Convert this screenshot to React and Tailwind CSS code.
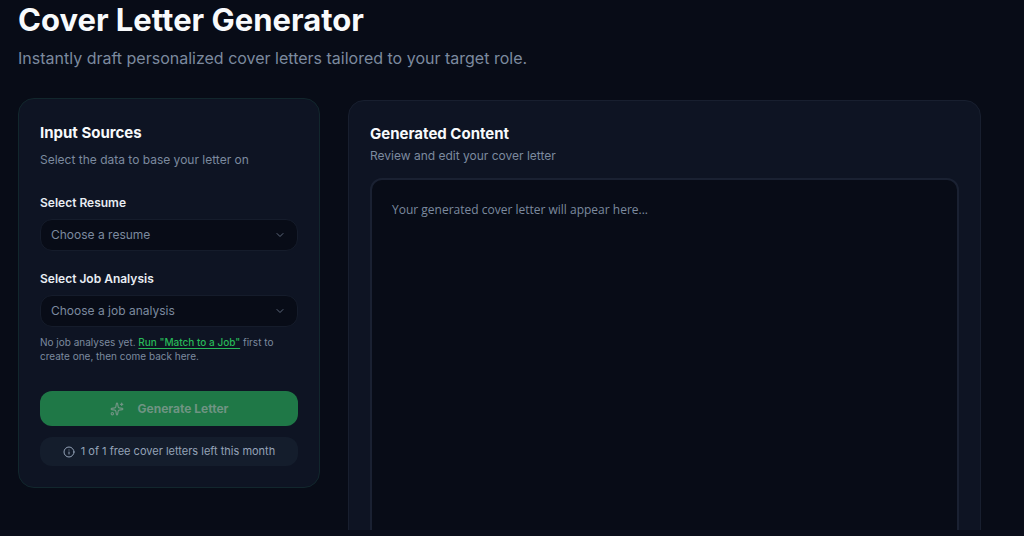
import { useState } from 'react';
import { ChevronDown, Info, Sparkles } from 'lucide-react';

function SelectField({ id, label, placeholder, value, onChange }) {
  return (
    <div>
      <label htmlFor={id} className="block text-[12px] leading-4 font-semibold text-[#e8edf3]">
        {label}
      </label>
      <div className="relative mt-2">
        <select
          id={id}
          value={value}
          onChange={(e) => onChange(e.target.value)}
          className="block w-full h-8 appearance-none rounded-xl border border-[#151c2b] bg-[#080c17] pl-2.5 pr-8 text-[12px] text-[#7c8a9f] focus:outline-none"
        >
          <option value="">{placeholder}</option>
        </select>
        <ChevronDown className="pointer-events-none absolute right-3 top-2.5 size-3 text-[#5d687b]" />
      </div>
    </div>
  );
}

export default function App() {
  const [resume, setResume] = useState('');
  const [analysis, setAnalysis] = useState('');
  const [letter, setLetter] = useState('');

  return (
    <div className="flex h-screen flex-col overflow-hidden bg-[#080c17] font-['Inter',sans-serif]">
      <main className="min-h-0 flex-1 overflow-hidden pl-[18px] pr-[43px]">
        {/* Header */}
        <h1 className="text-[31px] leading-10 font-bold text-[#f8fafc]">Cover Letter Generator</h1>
        <p className="mt-1.5 text-[16px] leading-6 text-[#7c8a9f]">
          Instantly draft personalized cover letters tailored to your target role.
        </p>

        <div className="mt-7 grid grid-cols-[302fr_633fr] items-start gap-7">
          {/* Input Sources */}
          <section className="rounded-2xl border border-[#12272d] bg-[#0e1423] p-[21px]">
            <h2 className="text-[15px] leading-[26px] font-bold text-[#f8fafc]">Input Sources</h2>
            <p className="mt-1 text-[12px] leading-5 text-[#7c8a9f]">Select the data to base your letter on</p>

            <div className="mt-[25px]">
              <SelectField
                id="resume"
                label="Select Resume"
                placeholder="Choose a resume"
                value={resume}
                onChange={setResume}
              />
            </div>

            <div className="mt-5">
              <SelectField
                id="analysis"
                label="Select Job Analysis"
                placeholder="Choose a job analysis"
                value={analysis}
                onChange={setAnalysis}
              />
              <p className="mt-2 text-[10px] leading-[14px] text-[#7c8a9f]">
                No job analyses yet.{' '}
                <a href="#match" className="font-medium text-[#27b858] underline underline-offset-2">
                  Run "Match to a Job"
                </a>{' '}
                first to
                <br />
                create one, then come back here.
              </p>
            </div>

            <button
              type="button"
              disabled
              className="mt-7 flex h-[35px] w-full items-center justify-center gap-3.5 rounded-xl bg-[#1f7847] text-[12px] font-bold text-[#6f9483]"
            >
              <Sparkles className="size-3.5" />
              Generate Letter
            </button>

            <div className="mt-[11px] flex h-[29px] items-center justify-center gap-1.5 rounded-xl bg-[#141d2c] text-[11px] text-[#94a3b8]">
              <Info className="size-3" />
              <span>1 of 1 free cover letters left this month</span>
            </div>
          </section>

          {/* Generated Content */}
          <section className="mt-0.5 rounded-2xl border border-[#181f2f] bg-[#0e1423] p-[21px]">
            <h2 className="text-[15px] leading-6 font-bold text-[#f8fafc]">Generated Content</h2>
            <p className="text-[12px] leading-5 text-[#7c8a9f]">Review and edit your cover letter</p>
            <textarea
              aria-label="Cover letter"
              value={letter}
              onChange={(e) => setLetter(e.target.value)}
              placeholder="Your generated cover letter will appear here..."
              rows={24}
              className="mt-3 block w-full resize-none rounded-xl border-2 border-[#1a2132] bg-[#080c17] p-5 font-['Open_Sans',sans-serif] text-[12px] leading-5 text-[#e8edf3] placeholder:text-[#7c8a9f] focus:outline-none"
            />
          </section>
        </div>
      </main>
      <footer className="h-1.5 shrink-0 bg-[#0b0e1b]" />
    </div>
  );
}
